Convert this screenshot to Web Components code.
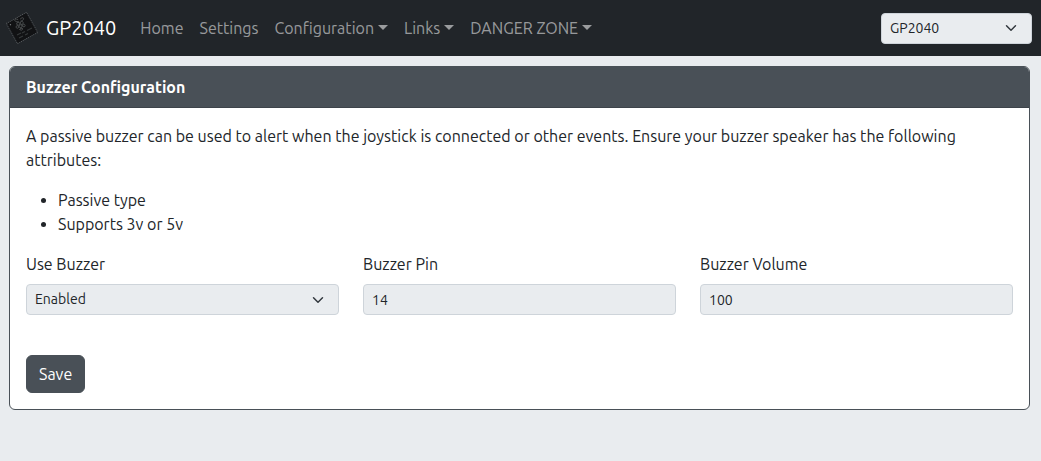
<!DOCTYPE html>
<html lang="en">
<head>
<meta charset="utf-8">
<meta name="viewport" content="width=device-width, initial-scale=1">
<title>GP2040 Configurator</title>
<style>
  :root {
    --dark: #212529;
    --slate: #495057;
    --surface: #e9ecef;
    --line: #ced4da;
    --chevron: url("data:image/svg+xml,%3Csvg xmlns='http://www.w3.org/2000/svg' viewBox='0 0 16 16'%3E%3Cpath fill='none' stroke='%23343a40' stroke-linecap='round' stroke-linejoin='round' stroke-width='2' d='m2 5 6 6 6-6'/%3E%3C/svg%3E");
  }
  body {
    margin: 0;
    background: var(--surface);
    color: var(--dark);
    font: 16px/24px Ubuntu, "Noto Sans", sans-serif;
  }
</style>
</head>
<body>
<gp-app></gp-app>

<script>
  const define = (name, html, setup) => {
    const template = document.createElement('template');
    template.innerHTML = html;
    customElements.define(name, class extends HTMLElement {
      constructor() {
        super();
        this.attachShadow({ mode: 'open' }).append(template.content.cloneNode(true));
      }
      connectedCallback() {
        if (setup) setup(this, this.shadowRoot);
      }
    });
  };

  const controlStyle = `
    select, input {
      display: block; box-sizing: border-box; width: 100%; height: 31px; margin: 0;
      padding: 4px 8px; border: 1px solid var(--line); border-radius: 4px;
      background-color: var(--surface); color: var(--dark);
      font: inherit; font-size: 14px; line-height: 21px; appearance: none;
    }
    select {
      padding-right: 36px;
      background-image: var(--chevron); background-repeat: no-repeat;
      background-position: right 14px center; background-size: 12px 12px;
    }`;

  define('chip-logo', `
    <style>:host { display: block; } svg { display: block; }</style>
    <svg width="32" height="32" viewBox="0 0 32 32" aria-hidden="true">
      <g transform="rotate(-29 16 16)">
        <rect x="4.500" y="4.500" width="23" height="23" fill="none" stroke="#5c5f61" stroke-width="1" stroke-dasharray="1 1"/>
        <rect x="5" y="5" width="22" height="22" rx="1" fill="#111214"/>
        <circle cx="7.500" cy="7.500" r=".7" fill="#77797b"/>
      </g>
      <g transform="rotate(-12 16 16)">
        <g fill="none" stroke="#505355" stroke-width=".8">
          <path d="M14 7c-2-1.500-3.500-1-3.500 0 .3 1.500 1.500 2 3.500 2M16 7c2-1.500 3.500-1 3.500 0-.3 1.500-1.500 2-3.500 2"/>
          <circle cx="13.200" cy="11" r="1.500"/><circle cx="16.800" cy="11" r="1.500"/>
          <circle cx="15" cy="14" r="1.500"/>
          <circle cx="11.700" cy="14" r="1.300"/><circle cx="18.300" cy="14" r="1.300"/>
          <path d="M13.200 17q1.800-2 3.600 0-1.800 2-3.600 0"/>
        </g>
      </g>
      <path d="M11 23l4-2m1 0 3-1.500m2-1 5-2.500M13 26l4-2m2-1 3-1.500" stroke="#35383a" stroke-width="1.200"/>
    </svg>`);

  define('nav-link', `
    <style>
      :host { display: block; }
      a { display: block; padding: 8px; color: rgba(255,255,255,.55); text-decoration: none; }
    </style>
    <a href="#"><slot></slot></a>`,
    (host, root) => { root.querySelector('a').href = host.getAttribute('to'); });

  define('nav-menu', `
    <style>
      :host { display: block; }
      button {
        padding: 8px; border: 0; background: none; color: rgba(255,255,255,.55);
        font: inherit; white-space: nowrap;
      }
      button::after {
        content: ""; display: inline-block; margin-left: 4px; vertical-align: 4px;
        border: 5px solid transparent; border-top-color: currentColor; border-bottom: 0;
      }
    </style>
    <button type="button" aria-haspopup="true"><slot></slot></button>`);

  define('nav-bar', `
    <style>
      :host { display: block; background: var(--dark); }
      header { display: flex; align-items: center; min-height: 56px; padding: 0 9px 0 6px; }
      .brand {
        display: flex; align-items: center; gap: 8px; margin-right: 16px;
        color: #fff; font-size: 20px; line-height: 30px; text-decoration: none;
      }
      nav { display: flex; flex: 1; }
      .board { width: 151px; }
      ${controlStyle}
    </style>
    <header>
      <a class="brand" href="#home"><chip-logo></chip-logo><span>GP2040</span></a>
      <nav>
        <nav-link to="#home">Home</nav-link>
        <nav-link to="#settings">Settings</nav-link>
        <nav-menu>Configuration</nav-menu>
        <nav-menu>Links</nav-menu>
        <nav-menu>DANGER ZONE</nav-menu>
      </nav>
      <div class="board"><select aria-label="Board"><option>GP2040</option></select></div>
    </header>`);

  define('form-field', `
    <style>
      :host { display: block; }
      label { display: block; margin-bottom: 8px; }
      ${controlStyle}
    </style>
    <label for="control"></label>`,
    (host, root) => {
      if (root.querySelector('#control')) return;
      root.querySelector('label').textContent = host.getAttribute('label');
      const value = host.getAttribute('value');
      const control = document.createElement(host.hasAttribute('select') ? 'select' : 'input');
      control.id = 'control';
      if (host.hasAttribute('select')) control.add(new Option(value));
      else control.value = value;
      root.append(control);
    });

  define('action-button', `
    <style>
      :host { display: block; }
      button {
        padding: 6px 12px; border: 1px solid var(--slate); border-radius: 6px;
        background: var(--slate); color: #fff; font: inherit;
      }
    </style>
    <button type="submit"><slot></slot></button>`);

  define('panel-card', `
    <style>
      :host { display: block; border: 1px solid var(--slate); border-radius: 6px; background: #fff; overflow: hidden; }
      h1 {
        margin: 0; padding: 8px 16px; border-bottom: 1px solid #3d434a;
        background: var(--slate); color: #fff; font-size: 16px; line-height: 24px; font-weight: 700;
      }
      div { padding: 16px; }
    </style>
    <h1><slot name="title"></slot></h1>
    <div><slot></slot></div>`);

  define('gp-app', `
    <style>
      :host { display: block; }
      main { padding: 10px 11px 10px 9px; }
      p, ul { margin: 0 0 16px; }
      ul { padding-left: 32px; }
      .fields { display: grid; grid-template-columns: repeat(3, 1fr); gap: 24px; margin-bottom: 40px; }
    </style>
    <nav-bar></nav-bar>
    <main>
      <panel-card>
        <span slot="title">Buzzer Configuration</span>
        <p>A passive buzzer can be used to alert when the joystick is connected or other events. Ensure your buzzer speaker has the following attributes:</p>
        <ul><li>Passive type</li><li>Supports 3v or 5v</li></ul>
        <form>
          <div class="fields">
            <form-field label="Use Buzzer" value="Enabled" select></form-field>
            <form-field label="Buzzer Pin" value="14"></form-field>
            <form-field label="Buzzer Volume" value="100"></form-field>
          </div>
          <action-button>Save</action-button>
        </form>
      </panel-card>
    </main>`);
</script>
</body>
</html>
